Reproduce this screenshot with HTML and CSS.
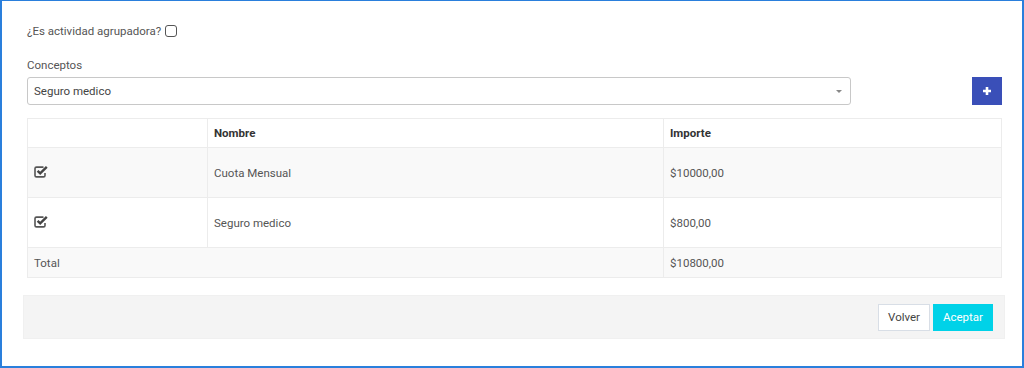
FILE: index.html
```html
<!DOCTYPE html>
<html lang="es">
  <head>
    <meta charset="UTF-8" />
    <title>Actividad</title>
    <link rel="stylesheet" href="styles.css">
  </head>
  <body>
    <div class="frame">
      <div class="check-line">
        <span>¿Es actividad agrupadora?</span>
        <span class="box"></span>
      </div>

      <div class="label">Conceptos</div>
      <div class="select-row">
        <div class="select">
          <span>Seguro medico</span>
          <span class="caret"></span>
        </div>
        <button class="btn-add">
          <svg width="10" height="10" viewBox="0 0 10 10">
            <path d="M5 1v8M1 5h8" stroke="#fff" stroke-width="2.6" />
          </svg>
        </button>
      </div>

      <table class="grid">
        <thead>
          <tr>
            <th class="c1"></th>
            <th class="c2">Nombre</th>
            <th>Importe</th>
          </tr>
        </thead>
        <tbody>
          <tr class="row odd">
            <td><svg class="ico" width="15" height="13" viewBox="0 0 15 13">
              <path d="M11 8v2.4c0 .9-.6 1.5-1.5 1.5H2.5c-.9 0-1.5-.6-1.5-1.5V3.6c0-.9.6-1.5 1.5-1.5h7" fill="none" stroke="#555" stroke-width="1.6" />
              <path d="M3.6 5.8l2.6 2.6 6.6-6.6" fill="none" stroke="#444" stroke-width="2.4" />
            </svg></td>
            <td>Cuota Mensual</td>
            <td>$10000,00</td>
          </tr>
          <tr class="row">
            <td><svg class="ico" width="15" height="13" viewBox="0 0 15 13">
              <path d="M11 8v2.4c0 .9-.6 1.5-1.5 1.5H2.5c-.9 0-1.5-.6-1.5-1.5V3.6c0-.9.6-1.5 1.5-1.5h7" fill="none" stroke="#555" stroke-width="1.6" />
              <path d="M3.6 5.8l2.6 2.6 6.6-6.6" fill="none" stroke="#444" stroke-width="2.4" />
            </svg></td>
            <td>Seguro medico</td>
            <td>$800,00</td>
          </tr>
          <tr class="total odd">
            <td colspan="2">Total</td>
            <td>$10800,00</td>
          </tr>
        </tbody>
      </table>

      <div class="footer">
        <button class="btn">Volver</button>
        <button class="btn primary">Aceptar</button>
      </div>
    </div>
  </body>
</html>
```

FILE: styles.css
```css
* {
  margin: 0;
  padding: 0;
  box-sizing: border-box;
}

body {
  font-family: Roboto, "Liberation Sans", sans-serif;
  font-size: 11.5px;
  color: #555555;
  background: #ffffff;
}

.frame {
  height: 368px;
  border: 2px solid #2a7fdc;
  border-top-width: 1px;
  padding: 20px 20px 0 25px;
}

.check-line {
  height: 20px;
  display: flex;
  align-items: center;
  gap: 4px;
}

.box {
  width: 12px;
  height: 12px;
  border: 1.5px solid #555555;
  border-radius: 3px;
}

.label {
  margin-top: 16px;
  height: 16px;
  line-height: 16px;
}

.select-row {
  margin-top: 4px;
  height: 28px;
  display: flex;
  justify-content: space-between;
  align-items: center;
}

.select {
  width: 824px;
  height: 28px;
  border: 1px solid #c8c8c8;
  border-radius: 3px;
  padding: 0 8px 0 6px;
  display: flex;
  align-items: center;
  justify-content: space-between;
  color: #444444;
}

.caret {
  width: 0;
  height: 0;
  border-left: 3px solid transparent;
  border-right: 3px solid transparent;
  border-top: 3px solid #888888;
}

.btn-add {
  width: 30px;
  height: 28px;
  border: none;
  background: #3a4fb8;
  display: flex;
  align-items: center;
  justify-content: center;
}

.grid {
  margin-top: 13px;
  width: 975px;
  border-collapse: collapse;
  border: 1px solid #ececec;
}

.grid th,
.grid td {
  border: 1px solid #ececec;
  text-align: left;
  padding: 0 6px;
}

.grid th {
  height: 29px;
  color: #333333;
  font-weight: bold;
}

.grid .c1 {
  width: 180px;
}

.grid .c2 {
  width: 456px;
}

.grid .row td {
  height: 50px;
}

.grid .total td {
  height: 30px;
}

.grid .odd td {
  background: #f9f9f9;
}

.ico {
  display: block;
  margin-top: -3px;
}

.footer {
  margin: 17px -3px 0 -4px;
  height: 44px;
  background: #f4f4f4;
  border: 1px solid #f0f0f0;
  display: flex;
  justify-content: flex-end;
  align-items: center;
  gap: 3px;
  padding-right: 11px;
}

.btn {
  height: 27px;
  padding: 0 9px;
  font-family: Roboto, "Liberation Sans", sans-serif;
  font-size: 11.5px;
  color: #444444;
  background: #ffffff;
  border: 1px solid #d8dee6;
}

.btn.primary {
  background: #00d2e8;
  border-color: #00d2e8;
  color: #ffffff;
}
```
